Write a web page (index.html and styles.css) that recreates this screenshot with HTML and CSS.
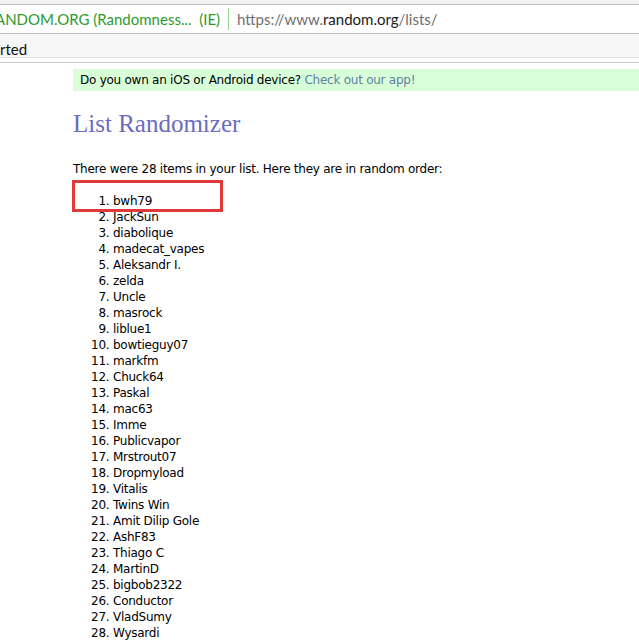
FILE: index.html
```html
<!DOCTYPE html>
<html lang="en">
<head>
    <meta charset="UTF-8">
    <title>List Randomizer</title>
    <link rel="stylesheet" href="styles.css">
</head>
<body>
    <div class="chrome">
        <div class="address-bar">
            <span class="tab-title">ANDOM.ORG (Randomness...&nbsp; (IE)</span>
            <span class="url">https://www.<b>random.org</b>/lists/</span>
        </div>
        <div class="bookmarks">
            <span>rted</span>
        </div>
    </div>

    <div class="page">
        <div class="app-banner">
            Do you own an iOS or Android device? <a href="#">Check out our app!</a>
        </div>

        <h2 class="title">List Randomizer</h2>

        <p class="intro">There were 28 items in your list. Here they are in random order:</p>

        <div class="result">
            <span class="highlight"></span>
            <ol class="items">
                <li>bwh79</li>
                <li>JackSun</li>
                <li>diabolique</li>
                <li>madecat_vapes</li>
                <li>Aleksandr I.</li>
                <li>zelda</li>
                <li>Uncle</li>
                <li>masrock</li>
                <li>liblue1</li>
                <li>bowtieguy07</li>
                <li>markfm</li>
                <li>Chuck64</li>
                <li>Paskal</li>
                <li>mac63</li>
                <li>Imme</li>
                <li>Publicvapor</li>
                <li>Mrstrout07</li>
                <li>Dropmyload</li>
                <li>Vitalis</li>
                <li>Twins Win</li>
                <li>Amit Dilip Gole</li>
                <li>AshF83</li>
                <li>Thiago C</li>
                <li>MartinD</li>
                <li>bigbob2322</li>
                <li>Conductor</li>
                <li>VladSumy</li>
                <li>Wysardi</li>
            </ol>
        </div>
    </div>
</body>
</html>
```

FILE: styles.css
```css
* {
    margin: 0;
    padding: 0;
    box-sizing: border-box;
}

body {
    font-family: 'DejaVu Sans', Verdana, sans-serif;
    background: white;
    color: #000;
    overflow: hidden;
}

/* browser chrome */
.chrome {
    background: #f2f2f2;
    padding-top: 4px;
}

.address-bar {
    height: 30px;
    background: white;
    border-top: 1px solid #bdbdbd;
    border-bottom: 1px solid #bdbdbd;
    display: flex;
    align-items: center;
    font-family: Lato, 'Open Sans', sans-serif;
    font-size: 15px;
    white-space: nowrap;
}

.tab-title {
    color: #2e9a2e;
    margin-left: -5px;
    padding-right: 8px;
    border-right: 1px solid #9ad29a;
    line-height: 22px;
}

.url {
    color: #707070;
    margin-left: 8px;
}

.url b {
    font-weight: normal;
    color: #1a1a1a;
}

.bookmarks {
    height: 29px;
    background: #f7f7f7;
    border-bottom: 1px solid #c8c8c8;
    box-shadow: inset 0 -4px 0 #fff, inset 0 -5px 0 #e4e4e4;
    display: flex;
    align-items: center;
    padding-top: 1px;
    font-family: Lato, 'Open Sans', sans-serif;
    font-size: 15px;
    color: #111;
}

/* page */
.page {
    padding: 6px 0 0 73px;
    font-size: 12px;
    letter-spacing: -0.25px;
}

.app-banner {
    background: #d9ffd9;
    padding: 4px 7px;
    line-height: 14px;
}

.app-banner a {
    color: #5f7fa6;
    text-decoration: none;
}

.title {
    font-family: Georgia, 'Liberation Serif', serif;
    font-weight: normal;
    font-size: 25px;
    letter-spacing: 0;
    color: #6b6bc0;
    margin-top: 18px;
    line-height: 30px;
}

.intro {
    margin-top: 22px;
    line-height: 16px;
}

.result {
    position: relative;
    margin-top: 3px;
}

.highlight {
    position: absolute;
    left: -1px;
    top: 0;
    width: 151px;
    height: 32px;
    border: 3px solid #e0393b;
}

.items {
    padding: 13px 0 0 40px;
    line-height: 16px;
}
```
